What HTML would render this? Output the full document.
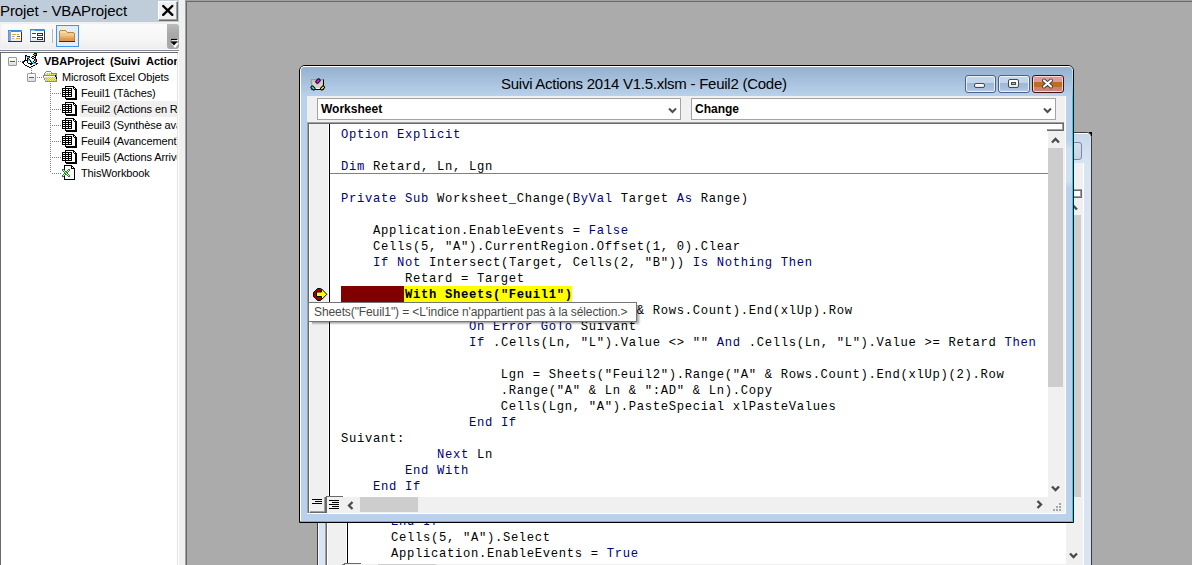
<!DOCTYPE html>
<html><head><meta charset="utf-8"><style>
*{margin:0;padding:0;box-sizing:border-box}
html,body{width:1192px;height:565px;overflow:hidden;background:#ababab;position:relative;font-family:"Liberation Sans",sans-serif}
.a{position:absolute}
.mono{font-family:"Liberation Mono",monospace;font-size:12.2px;letter-spacing:0.68px;line-height:16px;white-space:pre;color:#000}
.k{color:#00007f}
.ti{position:absolute;font-size:11px;line-height:16px;white-space:pre;color:#000;letter-spacing:-0.12px}
</style></head><body>
<div class="a" style="left:0px;top:0px;width:185px;height:565px;background:#f0f0f0"></div>
<div class="a" style="left:0px;top:0px;width:179px;height:22px;background:#bfcddb"></div>
<div class="a" style="left:0px;top:1px;font-size:15px;line-height:20px;letter-spacing:-0.12px;white-space:pre;color:#000">Projet - VBAProject</div>
<div class="a" style="left:158px;top:1px;width:20px;height:20px;background:#f0f0f0;border-top:1px solid #fff;border-left:1px solid #fff;border-right:1px solid #696969;border-bottom:1px solid #696969;box-shadow:inset -1px -1px 0 #a0a0a0"><svg width="18" height="18" class="a" style="left:0;top:0"><path d="M4.2 4 L13.3 12.8 M13.3 4 L4.2 12.8" stroke="#000" stroke-width="2.4" stroke-linecap="round"/></svg></div>
<div class="a" style="left:1px;top:24px;width:176px;height:25px;background:linear-gradient(#fbfbfb,#f6f6f6 60%,#ededed);border-radius:3px"></div>
<div class="a" style="left:167px;top:24px;width:12px;height:25px;background:linear-gradient(#b8bcbc,#a8a8a8 40%);border-radius:0 3px 3px 3px"></div>
<svg class="a" style="left:168px;top:38px" width="11" height="10"><path d="M4 2.5h6M4 5.5h6l-3 4z" stroke="#fff" stroke-width="1" fill="#fff"/><path d="M3 1.5h6" stroke="#000" stroke-width="1.2"/><path d="M2.5 3.5h7l-3.5 4z" fill="#000"/></svg>
<div class="a" style="left:0px;top:49px;width:179px;height:1px;background:#fafafa"></div>
<div class="a" style="left:0px;top:50px;width:179px;height:1px;background:#7d8799"></div>
<div class="a" style="left:0px;top:51px;width:179px;height:1px;background:#fff"></div>
<svg class="a" style="left:8px;top:30px" width="14" height="12" shape-rendering="crispEdges"><rect x="0" y="0" width="13" height="1" fill="#3c8de0"/><rect x="13" y="0" width="1" height="1" fill="#5f9ad8"/><rect x="0" y="1" width="1" height="1" fill="#3c8de0"/><rect x="1" y="1" width="2" height="1" fill="#9cc8f2"/><rect x="3" y="1" width="10" height="1" fill="#3c8de0"/><rect x="13" y="1" width="1" height="1" fill="#5f9ad8"/><rect x="0" y="2" width="1" height="1" fill="#5f9ad8"/><rect x="1" y="2" width="2" height="1" fill="#8aa4c8"/><rect x="3" y="2" width="10" height="1" fill="#fff"/><rect x="13" y="2" width="1" height="1" fill="#333"/><rect x="0" y="3" width="1" height="1" fill="#5f9ad8"/><rect x="1" y="3" width="2" height="1" fill="#8aa4c8"/><rect x="3" y="3" width="10" height="1" fill="#fff"/><rect x="13" y="3" width="1" height="1" fill="#333"/><rect x="0" y="4" width="1" height="1" fill="#5f9ad8"/><rect x="1" y="4" width="2" height="1" fill="#8aa4c8"/><rect x="3" y="4" width="1" height="1" fill="#fff"/><rect x="4" y="4" width="4" height="1" fill="#f0a030"/><rect x="8" y="4" width="1" height="1" fill="#fff"/><rect x="9" y="4" width="2" height="1" fill="#f0a030"/><rect x="11" y="4" width="2" height="1" fill="#fff"/><rect x="13" y="4" width="1" height="1" fill="#333"/><rect x="0" y="5" width="1" height="1" fill="#5f9ad8"/><rect x="1" y="5" width="2" height="1" fill="#8aa4c8"/><rect x="3" y="5" width="10" height="1" fill="#fff"/><rect x="13" y="5" width="1" height="1" fill="#333"/><rect x="0" y="6" width="1" height="1" fill="#5f9ad8"/><rect x="1" y="6" width="2" height="1" fill="#8aa4c8"/><rect x="3" y="6" width="1" height="1" fill="#fff"/><rect x="4" y="6" width="3" height="1" fill="#a8b4c4"/><rect x="7" y="6" width="2" height="1" fill="#fff"/><rect x="9" y="6" width="3" height="1" fill="#6a7490"/><rect x="12" y="6" width="1" height="1" fill="#fff"/><rect x="13" y="6" width="1" height="1" fill="#333"/><rect x="0" y="7" width="1" height="1" fill="#5f9ad8"/><rect x="1" y="7" width="2" height="1" fill="#8aa4c8"/><rect x="3" y="7" width="10" height="1" fill="#fff"/><rect x="13" y="7" width="1" height="1" fill="#333"/><rect x="0" y="8" width="1" height="1" fill="#5f9ad8"/><rect x="1" y="8" width="2" height="1" fill="#8aa4c8"/><rect x="3" y="8" width="1" height="1" fill="#fff"/><rect x="4" y="8" width="2" height="1" fill="#a8b4c4"/><rect x="6" y="8" width="2" height="1" fill="#fff"/><rect x="8" y="8" width="4" height="1" fill="#f0a030"/><rect x="12" y="8" width="1" height="1" fill="#fff"/><rect x="13" y="8" width="1" height="1" fill="#333"/><rect x="0" y="9" width="1" height="1" fill="#5f9ad8"/><rect x="1" y="9" width="2" height="1" fill="#8aa4c8"/><rect x="3" y="9" width="1" height="1" fill="#fff"/><rect x="4" y="9" width="9" height="1" fill="#e4eef8"/><rect x="13" y="9" width="1" height="1" fill="#333"/><rect x="0" y="10" width="1" height="1" fill="#5f9ad8"/><rect x="1" y="10" width="2" height="1" fill="#8aa4c8"/><rect x="3" y="10" width="10" height="1" fill="#e4eef8"/><rect x="13" y="10" width="1" height="1" fill="#333"/><rect x="0" y="11" width="14" height="1" fill="#333"/></svg>
<svg class="a" style="left:30px;top:29px" width="15" height="13" shape-rendering="crispEdges"><rect x="0" y="0" width="14" height="1" fill="#3c8de0"/><rect x="14" y="0" width="1" height="1" fill="#5f9ad8"/><rect x="0" y="1" width="1" height="1" fill="#3c8de0"/><rect x="1" y="1" width="4" height="1" fill="#9cc8f2"/><rect x="5" y="1" width="9" height="1" fill="#3c8de0"/><rect x="14" y="1" width="1" height="1" fill="#5f9ad8"/><rect x="0" y="2" width="1" height="1" fill="#5f9ad8"/><rect x="1" y="2" width="13" height="1" fill="#fff"/><rect x="14" y="2" width="1" height="1" fill="#333"/><rect x="0" y="3" width="1" height="1" fill="#5f9ad8"/><rect x="1" y="3" width="13" height="1" fill="#fff"/><rect x="14" y="3" width="1" height="1" fill="#333"/><rect x="0" y="4" width="1" height="1" fill="#5f9ad8"/><rect x="1" y="4" width="1" height="1" fill="#fff"/><rect x="2" y="4" width="4" height="1" fill="#444"/><rect x="6" y="4" width="1" height="1" fill="#fff"/><rect x="7" y="4" width="6" height="1" fill="#333"/><rect x="13" y="4" width="1" height="1" fill="#fff"/><rect x="14" y="4" width="1" height="1" fill="#333"/><rect x="0" y="5" width="1" height="1" fill="#5f9ad8"/><rect x="1" y="5" width="6" height="1" fill="#fff"/><rect x="7" y="5" width="1" height="1" fill="#333"/><rect x="8" y="5" width="4" height="1" fill="#fff"/><rect x="12" y="5" width="1" height="1" fill="#333"/><rect x="13" y="5" width="1" height="1" fill="#fff"/><rect x="14" y="5" width="1" height="1" fill="#333"/><rect x="0" y="6" width="1" height="1" fill="#5f9ad8"/><rect x="1" y="6" width="6" height="1" fill="#fff"/><rect x="7" y="6" width="6" height="1" fill="#333"/><rect x="13" y="6" width="1" height="1" fill="#fff"/><rect x="14" y="6" width="1" height="1" fill="#333"/><rect x="0" y="7" width="1" height="1" fill="#5f9ad8"/><rect x="1" y="7" width="13" height="1" fill="#fff"/><rect x="14" y="7" width="1" height="1" fill="#333"/><rect x="0" y="8" width="1" height="1" fill="#5f9ad8"/><rect x="1" y="8" width="1" height="1" fill="#fff"/><rect x="2" y="8" width="4" height="1" fill="#444"/><rect x="6" y="8" width="1" height="1" fill="#fff"/><rect x="7" y="8" width="6" height="1" fill="#333"/><rect x="13" y="8" width="1" height="1" fill="#fff"/><rect x="14" y="8" width="1" height="1" fill="#333"/><rect x="0" y="9" width="1" height="1" fill="#5f9ad8"/><rect x="1" y="9" width="6" height="1" fill="#fff"/><rect x="7" y="9" width="1" height="1" fill="#333"/><rect x="8" y="9" width="4" height="1" fill="#fff"/><rect x="12" y="9" width="1" height="1" fill="#333"/><rect x="13" y="9" width="1" height="1" fill="#fff"/><rect x="14" y="9" width="1" height="1" fill="#333"/><rect x="0" y="10" width="1" height="1" fill="#5f9ad8"/><rect x="1" y="10" width="1" height="1" fill="#fff"/><rect x="2" y="10" width="5" height="1" fill="#dfeaf6"/><rect x="7" y="10" width="6" height="1" fill="#333"/><rect x="13" y="10" width="1" height="1" fill="#dfeaf6"/><rect x="14" y="10" width="1" height="1" fill="#333"/><rect x="0" y="11" width="1" height="1" fill="#5f9ad8"/><rect x="1" y="11" width="13" height="1" fill="#dfeaf6"/><rect x="14" y="11" width="1" height="1" fill="#333"/><rect x="0" y="12" width="15" height="1" fill="#333"/></svg>
<div class="a" style="left:52px;top:29px;width:1px;height:14px;background:#b8b8b8"></div>
<div class="a" style="left:56px;top:25px;width:23px;height:22px;background:#e5eef8;border:1px solid #3d95f0"></div>
<svg class="a" style="left:59px;top:30px" width="16" height="12" shape-rendering="crispEdges"><rect x="1" y="0" width="6" height="1" fill="#b8884a"/><rect x="0" y="1" width="1" height="1" fill="#b8884a"/><rect x="1" y="1" width="6" height="1" fill="#f6dca0"/><rect x="7" y="1" width="1" height="1" fill="#b8884a"/><rect x="0" y="2" width="1" height="1" fill="#b8884a"/><rect x="1" y="2" width="7" height="1" fill="#f6dca0"/><rect x="8" y="2" width="7" height="1" fill="#b8884a"/><rect x="0" y="3" width="1" height="1" fill="#b8884a"/><rect x="1" y="3" width="14" height="1" fill="#f2c888"/><rect x="15" y="3" width="1" height="1" fill="#b8884a"/><rect x="0" y="4" width="1" height="1" fill="#b8884a"/><rect x="1" y="4" width="14" height="1" fill="#f2c888"/><rect x="15" y="4" width="1" height="1" fill="#b8884a"/><rect x="0" y="5" width="1" height="1" fill="#b8884a"/><rect x="1" y="5" width="14" height="1" fill="#f2c888"/><rect x="15" y="5" width="1" height="1" fill="#b8884a"/><rect x="0" y="6" width="1" height="1" fill="#b8884a"/><rect x="1" y="6" width="14" height="1" fill="#eab06a"/><rect x="15" y="6" width="1" height="1" fill="#b8884a"/><rect x="0" y="7" width="1" height="1" fill="#b8884a"/><rect x="1" y="7" width="14" height="1" fill="#eab06a"/><rect x="15" y="7" width="1" height="1" fill="#b8884a"/><rect x="0" y="8" width="1" height="1" fill="#b8884a"/><rect x="1" y="8" width="14" height="1" fill="#dc9a52"/><rect x="15" y="8" width="1" height="1" fill="#b8884a"/><rect x="0" y="9" width="1" height="1" fill="#b8884a"/><rect x="1" y="9" width="14" height="1" fill="#dc9a52"/><rect x="15" y="9" width="1" height="1" fill="#b8884a"/><rect x="0" y="10" width="1" height="1" fill="#b8884a"/><rect x="1" y="10" width="14" height="1" fill="#dc9a52"/><rect x="15" y="10" width="1" height="1" fill="#b8884a"/><rect x="0" y="11" width="16" height="1" fill="#3a2a18"/></svg>
<div class="a" style="left:0px;top:52px;width:178px;height:513px;background:#fff;border-left:1px solid #696969;border-top:1px solid #696969"></div>
<div class="a" style="left:178px;top:52px;width:1px;height:513px;background:#fff"></div>
<div class="a" style="left:0;top:0;width:177px;height:565px;overflow:hidden">
<div class="a" style="left:8px;top:57px;width:9px;height:9px;border:1px solid #9a9a9a;background:linear-gradient(#fff,#dcdcdc);border-radius:1px"></div><div class="a" style="left:10px;top:61px;width:5px;height:1px;background:#4b5a88"></div>
<div class="a" style="left:27px;top:73px;width:9px;height:9px;border:1px solid #9a9a9a;background:linear-gradient(#fff,#dcdcdc);border-radius:1px"></div><div class="a" style="left:29px;top:77px;width:5px;height:1px;background:#4b5a88"></div>
<div class="a" style="left:18px;top:61px;width:6px;height:1px;background:repeating-linear-gradient(90deg,#808080 0 1px,transparent 1px 2px)"></div>
<div class="a" style="left:31px;top:68px;width:1px;height:5px;background:repeating-linear-gradient(180deg,#808080 0 1px,transparent 1px 2px)"></div>
<div class="a" style="left:37px;top:77px;width:7px;height:1px;background:repeating-linear-gradient(90deg,#808080 0 1px,transparent 1px 2px)"></div>
<div class="a" style="left:50px;top:83px;width:1px;height:90px;background:repeating-linear-gradient(180deg,#808080 0 1px,transparent 1px 2px)"></div>
<div class="a" style="left:52px;top:93px;width:10px;height:1px;background:repeating-linear-gradient(90deg,#808080 0 1px,transparent 1px 2px)"></div>
<div class="a" style="left:52px;top:109px;width:10px;height:1px;background:repeating-linear-gradient(90deg,#808080 0 1px,transparent 1px 2px)"></div>
<div class="a" style="left:52px;top:125px;width:10px;height:1px;background:repeating-linear-gradient(90deg,#808080 0 1px,transparent 1px 2px)"></div>
<div class="a" style="left:52px;top:141px;width:10px;height:1px;background:repeating-linear-gradient(90deg,#808080 0 1px,transparent 1px 2px)"></div>
<div class="a" style="left:52px;top:157px;width:10px;height:1px;background:repeating-linear-gradient(90deg,#808080 0 1px,transparent 1px 2px)"></div>
<div class="a" style="left:52px;top:173px;width:10px;height:1px;background:repeating-linear-gradient(90deg,#808080 0 1px,transparent 1px 2px)"></div>
<svg class="a" style="left:22px;top:53px" width="17" height="15" shape-rendering="crispEdges"><rect x="12" y="0" width="3" height="1" fill="#000"/><rect x="11" y="1" width="1" height="1" fill="#000"/><rect x="12" y="1" width="2" height="1" fill="#70c000"/><rect x="14" y="1" width="1" height="1" fill="#000"/><rect x="3" y="2" width="2" height="1" fill="#000"/><rect x="12" y="2" width="3" height="1" fill="#000"/><rect x="3" y="3" width="1" height="1" fill="#000"/><rect x="4" y="3" width="1" height="1" fill="#00e8ff"/><rect x="5" y="3" width="3" height="1" fill="#000"/><rect x="10" y="3" width="2" height="1" fill="#000"/><rect x="13" y="3" width="1" height="1" fill="#000"/><rect x="3" y="4" width="1" height="1" fill="#000"/><rect x="4" y="4" width="1" height="1" fill="#fff"/><rect x="5" y="4" width="2" height="1" fill="#00e8ff"/><rect x="7" y="4" width="1" height="1" fill="#000"/><rect x="9" y="4" width="1" height="1" fill="#000"/><rect x="10" y="4" width="2" height="1" fill="#f0f000"/><rect x="12" y="4" width="2" height="1" fill="#000"/><rect x="3" y="5" width="1" height="1" fill="#000"/><rect x="4" y="5" width="1" height="1" fill="#fff"/><rect x="5" y="5" width="2" height="1" fill="#000"/><rect x="10" y="5" width="2" height="1" fill="#000"/><rect x="13" y="5" width="1" height="1" fill="#000"/><rect x="3" y="6" width="1" height="1" fill="#000"/><rect x="4" y="6" width="1" height="1" fill="#fff"/><rect x="5" y="6" width="1" height="1" fill="#000"/><rect x="6" y="6" width="1" height="1" fill="#00e8ff"/><rect x="7" y="6" width="1" height="1" fill="#000"/><rect x="12" y="6" width="1" height="1" fill="#000"/><rect x="13" y="6" width="1" height="1" fill="#ff00ff"/><rect x="14" y="6" width="1" height="1" fill="#000"/><rect x="2" y="7" width="4" height="1" fill="#000"/><rect x="6" y="7" width="2" height="1" fill="#00e8ff"/><rect x="8" y="7" width="1" height="1" fill="#000"/><rect x="12" y="7" width="1" height="1" fill="#000"/><rect x="13" y="7" width="1" height="1" fill="#ff00ff"/><rect x="14" y="7" width="1" height="1" fill="#000"/><rect x="1" y="8" width="2" height="1" fill="#000"/><rect x="5" y="8" width="1" height="1" fill="#000"/><rect x="6" y="8" width="2" height="1" fill="#fff"/><rect x="8" y="8" width="1" height="1" fill="#000"/><rect x="9" y="8" width="1" height="1" fill="#00e8ff"/><rect x="11" y="8" width="1" height="1" fill="#000"/><rect x="13" y="8" width="1" height="1" fill="#ff00ff"/><rect x="14" y="8" width="1" height="1" fill="#000"/><rect x="0" y="9" width="2" height="1" fill="#000"/><rect x="5" y="9" width="1" height="1" fill="#000"/><rect x="6" y="9" width="3" height="1" fill="#fff"/><rect x="9" y="9" width="1" height="1" fill="#000"/><rect x="10" y="9" width="2" height="1" fill="#00e8ff"/><rect x="12" y="9" width="2" height="1" fill="#000"/><rect x="1" y="10" width="1" height="1" fill="#000"/><rect x="6" y="10" width="5" height="1" fill="#000"/><rect x="11" y="10" width="3" height="1" fill="#00e8ff"/><rect x="14" y="10" width="2" height="1" fill="#000"/><rect x="2" y="11" width="1" height="1" fill="#000"/><rect x="8" y="11" width="2" height="1" fill="#000"/><rect x="13" y="11" width="1" height="1" fill="#00e8ff"/><rect x="14" y="11" width="1" height="1" fill="#000"/><rect x="3" y="12" width="2" height="1" fill="#000"/><rect x="11" y="12" width="2" height="1" fill="#000"/><rect x="5" y="13" width="2" height="1" fill="#000"/><rect x="9" y="13" width="2" height="1" fill="#000"/><rect x="7" y="14" width="2" height="1" fill="#000"/></svg>
<svg class="a" style="left:43px;top:71px" width="15" height="11" shape-rendering="crispEdges"><rect x="3" y="0" width="5" height="1" fill="#8a8a8a"/><rect x="2" y="1" width="1" height="1" fill="#8a8a8a"/><rect x="3" y="1" width="5" height="1" fill="#fff"/><rect x="8" y="1" width="1" height="1" fill="#8a8a8a"/><rect x="1" y="2" width="1" height="1" fill="#8a8a8a"/><rect x="2" y="2" width="1" height="1" fill="#fff"/><rect x="3" y="2" width="1" height="1" fill="#ffff00"/><rect x="4" y="2" width="1" height="1" fill="#b8b8c8"/><rect x="5" y="2" width="1" height="1" fill="#ffff00"/><rect x="6" y="2" width="1" height="1" fill="#b8b8c8"/><rect x="7" y="2" width="1" height="1" fill="#ffff00"/><rect x="8" y="2" width="6" height="1" fill="#8a8a8a"/><rect x="1" y="3" width="1" height="1" fill="#8a8a8a"/><rect x="2" y="3" width="1" height="1" fill="#b8b8c8"/><rect x="3" y="3" width="1" height="1" fill="#ffff00"/><rect x="4" y="3" width="1" height="1" fill="#b8b8c8"/><rect x="5" y="3" width="1" height="1" fill="#ffff00"/><rect x="6" y="3" width="1" height="1" fill="#b8b8c8"/><rect x="7" y="3" width="1" height="1" fill="#ffff00"/><rect x="8" y="3" width="1" height="1" fill="#b8b8c8"/><rect x="9" y="3" width="1" height="1" fill="#ffff00"/><rect x="10" y="3" width="1" height="1" fill="#b8b8c8"/><rect x="11" y="3" width="1" height="1" fill="#ffff00"/><rect x="12" y="3" width="1" height="1" fill="#b8b8c8"/><rect x="13" y="3" width="1" height="1" fill="#8a8a8a"/><rect x="0" y="4" width="12" height="1" fill="#8a8a8a"/><rect x="12" y="4" width="1" height="1" fill="#000"/><rect x="13" y="4" width="1" height="1" fill="#8a8a8a"/><rect x="0" y="5" width="1" height="1" fill="#8a8a8a"/><rect x="1" y="5" width="11" height="1" fill="#fff"/><rect x="12" y="5" width="1" height="1" fill="#000"/><rect x="13" y="5" width="1" height="1" fill="#8a8a8a"/><rect x="0" y="6" width="1" height="1" fill="#8a8a8a"/><rect x="1" y="6" width="1" height="1" fill="#fff"/><rect x="2" y="6" width="1" height="1" fill="#ffff00"/><rect x="3" y="6" width="1" height="1" fill="#b8b8c8"/><rect x="4" y="6" width="1" height="1" fill="#ffff00"/><rect x="5" y="6" width="1" height="1" fill="#b8b8c8"/><rect x="6" y="6" width="1" height="1" fill="#ffff00"/><rect x="7" y="6" width="1" height="1" fill="#b8b8c8"/><rect x="8" y="6" width="1" height="1" fill="#ffff00"/><rect x="9" y="6" width="1" height="1" fill="#b8b8c8"/><rect x="10" y="6" width="1" height="1" fill="#ffff00"/><rect x="11" y="6" width="1" height="1" fill="#b8b8c8"/><rect x="12" y="6" width="1" height="1" fill="#ffff00"/><rect x="13" y="6" width="1" height="1" fill="#000"/><rect x="1" y="7" width="1" height="1" fill="#8a8a8a"/><rect x="2" y="7" width="1" height="1" fill="#b8b8c8"/><rect x="3" y="7" width="1" height="1" fill="#ffff00"/><rect x="4" y="7" width="1" height="1" fill="#b8b8c8"/><rect x="5" y="7" width="1" height="1" fill="#ffff00"/><rect x="6" y="7" width="1" height="1" fill="#b8b8c8"/><rect x="7" y="7" width="1" height="1" fill="#ffff00"/><rect x="8" y="7" width="1" height="1" fill="#b8b8c8"/><rect x="9" y="7" width="1" height="1" fill="#ffff00"/><rect x="10" y="7" width="1" height="1" fill="#b8b8c8"/><rect x="11" y="7" width="1" height="1" fill="#ffff00"/><rect x="12" y="7" width="1" height="1" fill="#b8b8c8"/><rect x="13" y="7" width="1" height="1" fill="#000"/><rect x="1" y="8" width="1" height="1" fill="#8a8a8a"/><rect x="2" y="8" width="1" height="1" fill="#ffff00"/><rect x="3" y="8" width="1" height="1" fill="#b8b8c8"/><rect x="4" y="8" width="1" height="1" fill="#ffff00"/><rect x="5" y="8" width="1" height="1" fill="#b8b8c8"/><rect x="6" y="8" width="1" height="1" fill="#ffff00"/><rect x="7" y="8" width="1" height="1" fill="#b8b8c8"/><rect x="8" y="8" width="1" height="1" fill="#ffff00"/><rect x="9" y="8" width="1" height="1" fill="#b8b8c8"/><rect x="10" y="8" width="1" height="1" fill="#ffff00"/><rect x="11" y="8" width="1" height="1" fill="#b8b8c8"/><rect x="12" y="8" width="1" height="1" fill="#ffff00"/><rect x="13" y="8" width="1" height="1" fill="#8a8a8a"/><rect x="2" y="9" width="1" height="1" fill="#b8b8c8"/><rect x="3" y="9" width="1" height="1" fill="#ffff00"/><rect x="4" y="9" width="1" height="1" fill="#b8b8c8"/><rect x="5" y="9" width="1" height="1" fill="#ffff00"/><rect x="6" y="9" width="1" height="1" fill="#b8b8c8"/><rect x="7" y="9" width="1" height="1" fill="#ffff00"/><rect x="8" y="9" width="1" height="1" fill="#b8b8c8"/><rect x="9" y="9" width="1" height="1" fill="#ffff00"/><rect x="10" y="9" width="1" height="1" fill="#b8b8c8"/><rect x="11" y="9" width="1" height="1" fill="#ffff00"/><rect x="12" y="9" width="1" height="1" fill="#b8b8c8"/><rect x="13" y="9" width="1" height="1" fill="#8a8a8a"/><rect x="2" y="10" width="12" height="1" fill="#8a8a8a"/></svg>
<div style="position:absolute;top:53px;font-size:11px;font-weight:bold;line-height:16px;white-space:pre;left:44px">VBAProject</div><div style="position:absolute;top:53px;font-size:11px;font-weight:bold;line-height:16px;white-space:pre;left:110px">(Suivi</div><div style="position:absolute;top:53px;font-size:11px;font-weight:bold;line-height:16px;white-space:pre;left:146px">Actions 2014</div>
<div class="ti" style="left:62px;top:69px">Microsoft Excel Objets</div>
<div class="a" style="left:80px;top:101px;width:98px;height:16px;background:#f0f0f0"></div>
<svg class="a" style="left:62px;top:86px" width="16" height="14" shape-rendering="crispEdges"><rect x="3" y="0" width="9" height="1" fill="#000"/><rect x="3" y="1" width="1" height="1" fill="#000"/><rect x="4" y="1" width="7" height="1" fill="#fff"/><rect x="11" y="1" width="2" height="1" fill="#000"/><rect x="0" y="2" width="10" height="1" fill="#000"/><rect x="10" y="2" width="1" height="1" fill="#fff"/><rect x="11" y="2" width="1" height="1" fill="#000"/><rect x="12" y="2" width="1" height="1" fill="#fff"/><rect x="13" y="2" width="1" height="1" fill="#000"/><rect x="0" y="3" width="1" height="1" fill="#000"/><rect x="1" y="3" width="2" height="1" fill="#fff"/><rect x="3" y="3" width="1" height="1" fill="#000"/><rect x="4" y="3" width="2" height="1" fill="#fff"/><rect x="6" y="3" width="1" height="1" fill="#000"/><rect x="7" y="3" width="2" height="1" fill="#fff"/><rect x="9" y="3" width="1" height="1" fill="#000"/><rect x="10" y="3" width="2" height="1" fill="#fff"/><rect x="12" y="3" width="3" height="1" fill="#000"/><rect x="0" y="4" width="10" height="1" fill="#000"/><rect x="10" y="4" width="3" height="1" fill="#fff"/><rect x="13" y="4" width="2" height="1" fill="#000"/><rect x="0" y="5" width="1" height="1" fill="#000"/><rect x="1" y="5" width="2" height="1" fill="#fff"/><rect x="3" y="5" width="1" height="1" fill="#000"/><rect x="4" y="5" width="2" height="1" fill="#fff"/><rect x="6" y="5" width="1" height="1" fill="#000"/><rect x="7" y="5" width="2" height="1" fill="#fff"/><rect x="9" y="5" width="1" height="1" fill="#000"/><rect x="10" y="5" width="3" height="1" fill="#fff"/><rect x="13" y="5" width="2" height="1" fill="#000"/><rect x="0" y="6" width="10" height="1" fill="#000"/><rect x="10" y="6" width="3" height="1" fill="#fff"/><rect x="13" y="6" width="2" height="1" fill="#000"/><rect x="0" y="7" width="1" height="1" fill="#000"/><rect x="1" y="7" width="2" height="1" fill="#fff"/><rect x="3" y="7" width="1" height="1" fill="#000"/><rect x="4" y="7" width="2" height="1" fill="#fff"/><rect x="6" y="7" width="1" height="1" fill="#000"/><rect x="7" y="7" width="2" height="1" fill="#fff"/><rect x="9" y="7" width="1" height="1" fill="#000"/><rect x="10" y="7" width="3" height="1" fill="#fff"/><rect x="13" y="7" width="2" height="1" fill="#000"/><rect x="0" y="8" width="10" height="1" fill="#000"/><rect x="10" y="8" width="3" height="1" fill="#fff"/><rect x="13" y="8" width="2" height="1" fill="#000"/><rect x="0" y="9" width="1" height="1" fill="#000"/><rect x="1" y="9" width="2" height="1" fill="#fff"/><rect x="3" y="9" width="1" height="1" fill="#000"/><rect x="4" y="9" width="2" height="1" fill="#fff"/><rect x="6" y="9" width="1" height="1" fill="#000"/><rect x="7" y="9" width="2" height="1" fill="#fff"/><rect x="9" y="9" width="1" height="1" fill="#000"/><rect x="10" y="9" width="3" height="1" fill="#fff"/><rect x="13" y="9" width="2" height="1" fill="#000"/><rect x="0" y="10" width="10" height="1" fill="#000"/><rect x="10" y="10" width="3" height="1" fill="#fff"/><rect x="13" y="10" width="2" height="1" fill="#000"/><rect x="3" y="11" width="1" height="1" fill="#000"/><rect x="4" y="11" width="9" height="1" fill="#fff"/><rect x="13" y="11" width="2" height="1" fill="#000"/><rect x="3" y="12" width="12" height="1" fill="#000"/><rect x="4" y="13" width="11" height="1" fill="#000"/></svg>
<div class="ti" style="left:81px;top:85px">Feuil1 (Tâches)</div>
<svg class="a" style="left:62px;top:102px" width="16" height="14" shape-rendering="crispEdges"><rect x="3" y="0" width="9" height="1" fill="#000"/><rect x="3" y="1" width="1" height="1" fill="#000"/><rect x="4" y="1" width="7" height="1" fill="#fff"/><rect x="11" y="1" width="2" height="1" fill="#000"/><rect x="0" y="2" width="10" height="1" fill="#000"/><rect x="10" y="2" width="1" height="1" fill="#fff"/><rect x="11" y="2" width="1" height="1" fill="#000"/><rect x="12" y="2" width="1" height="1" fill="#fff"/><rect x="13" y="2" width="1" height="1" fill="#000"/><rect x="0" y="3" width="1" height="1" fill="#000"/><rect x="1" y="3" width="2" height="1" fill="#fff"/><rect x="3" y="3" width="1" height="1" fill="#000"/><rect x="4" y="3" width="2" height="1" fill="#fff"/><rect x="6" y="3" width="1" height="1" fill="#000"/><rect x="7" y="3" width="2" height="1" fill="#fff"/><rect x="9" y="3" width="1" height="1" fill="#000"/><rect x="10" y="3" width="2" height="1" fill="#fff"/><rect x="12" y="3" width="3" height="1" fill="#000"/><rect x="0" y="4" width="10" height="1" fill="#000"/><rect x="10" y="4" width="3" height="1" fill="#fff"/><rect x="13" y="4" width="2" height="1" fill="#000"/><rect x="0" y="5" width="1" height="1" fill="#000"/><rect x="1" y="5" width="2" height="1" fill="#fff"/><rect x="3" y="5" width="1" height="1" fill="#000"/><rect x="4" y="5" width="2" height="1" fill="#fff"/><rect x="6" y="5" width="1" height="1" fill="#000"/><rect x="7" y="5" width="2" height="1" fill="#fff"/><rect x="9" y="5" width="1" height="1" fill="#000"/><rect x="10" y="5" width="3" height="1" fill="#fff"/><rect x="13" y="5" width="2" height="1" fill="#000"/><rect x="0" y="6" width="10" height="1" fill="#000"/><rect x="10" y="6" width="3" height="1" fill="#fff"/><rect x="13" y="6" width="2" height="1" fill="#000"/><rect x="0" y="7" width="1" height="1" fill="#000"/><rect x="1" y="7" width="2" height="1" fill="#fff"/><rect x="3" y="7" width="1" height="1" fill="#000"/><rect x="4" y="7" width="2" height="1" fill="#fff"/><rect x="6" y="7" width="1" height="1" fill="#000"/><rect x="7" y="7" width="2" height="1" fill="#fff"/><rect x="9" y="7" width="1" height="1" fill="#000"/><rect x="10" y="7" width="3" height="1" fill="#fff"/><rect x="13" y="7" width="2" height="1" fill="#000"/><rect x="0" y="8" width="10" height="1" fill="#000"/><rect x="10" y="8" width="3" height="1" fill="#fff"/><rect x="13" y="8" width="2" height="1" fill="#000"/><rect x="0" y="9" width="1" height="1" fill="#000"/><rect x="1" y="9" width="2" height="1" fill="#fff"/><rect x="3" y="9" width="1" height="1" fill="#000"/><rect x="4" y="9" width="2" height="1" fill="#fff"/><rect x="6" y="9" width="1" height="1" fill="#000"/><rect x="7" y="9" width="2" height="1" fill="#fff"/><rect x="9" y="9" width="1" height="1" fill="#000"/><rect x="10" y="9" width="3" height="1" fill="#fff"/><rect x="13" y="9" width="2" height="1" fill="#000"/><rect x="0" y="10" width="10" height="1" fill="#000"/><rect x="10" y="10" width="3" height="1" fill="#fff"/><rect x="13" y="10" width="2" height="1" fill="#000"/><rect x="3" y="11" width="1" height="1" fill="#000"/><rect x="4" y="11" width="9" height="1" fill="#fff"/><rect x="13" y="11" width="2" height="1" fill="#000"/><rect x="3" y="12" width="12" height="1" fill="#000"/><rect x="4" y="13" width="11" height="1" fill="#000"/></svg>
<div class="ti" style="left:81px;top:101px">Feuil2 (Actions en Retard)</div>
<svg class="a" style="left:62px;top:118px" width="16" height="14" shape-rendering="crispEdges"><rect x="3" y="0" width="9" height="1" fill="#000"/><rect x="3" y="1" width="1" height="1" fill="#000"/><rect x="4" y="1" width="7" height="1" fill="#fff"/><rect x="11" y="1" width="2" height="1" fill="#000"/><rect x="0" y="2" width="10" height="1" fill="#000"/><rect x="10" y="2" width="1" height="1" fill="#fff"/><rect x="11" y="2" width="1" height="1" fill="#000"/><rect x="12" y="2" width="1" height="1" fill="#fff"/><rect x="13" y="2" width="1" height="1" fill="#000"/><rect x="0" y="3" width="1" height="1" fill="#000"/><rect x="1" y="3" width="2" height="1" fill="#fff"/><rect x="3" y="3" width="1" height="1" fill="#000"/><rect x="4" y="3" width="2" height="1" fill="#fff"/><rect x="6" y="3" width="1" height="1" fill="#000"/><rect x="7" y="3" width="2" height="1" fill="#fff"/><rect x="9" y="3" width="1" height="1" fill="#000"/><rect x="10" y="3" width="2" height="1" fill="#fff"/><rect x="12" y="3" width="3" height="1" fill="#000"/><rect x="0" y="4" width="10" height="1" fill="#000"/><rect x="10" y="4" width="3" height="1" fill="#fff"/><rect x="13" y="4" width="2" height="1" fill="#000"/><rect x="0" y="5" width="1" height="1" fill="#000"/><rect x="1" y="5" width="2" height="1" fill="#fff"/><rect x="3" y="5" width="1" height="1" fill="#000"/><rect x="4" y="5" width="2" height="1" fill="#fff"/><rect x="6" y="5" width="1" height="1" fill="#000"/><rect x="7" y="5" width="2" height="1" fill="#fff"/><rect x="9" y="5" width="1" height="1" fill="#000"/><rect x="10" y="5" width="3" height="1" fill="#fff"/><rect x="13" y="5" width="2" height="1" fill="#000"/><rect x="0" y="6" width="10" height="1" fill="#000"/><rect x="10" y="6" width="3" height="1" fill="#fff"/><rect x="13" y="6" width="2" height="1" fill="#000"/><rect x="0" y="7" width="1" height="1" fill="#000"/><rect x="1" y="7" width="2" height="1" fill="#fff"/><rect x="3" y="7" width="1" height="1" fill="#000"/><rect x="4" y="7" width="2" height="1" fill="#fff"/><rect x="6" y="7" width="1" height="1" fill="#000"/><rect x="7" y="7" width="2" height="1" fill="#fff"/><rect x="9" y="7" width="1" height="1" fill="#000"/><rect x="10" y="7" width="3" height="1" fill="#fff"/><rect x="13" y="7" width="2" height="1" fill="#000"/><rect x="0" y="8" width="10" height="1" fill="#000"/><rect x="10" y="8" width="3" height="1" fill="#fff"/><rect x="13" y="8" width="2" height="1" fill="#000"/><rect x="0" y="9" width="1" height="1" fill="#000"/><rect x="1" y="9" width="2" height="1" fill="#fff"/><rect x="3" y="9" width="1" height="1" fill="#000"/><rect x="4" y="9" width="2" height="1" fill="#fff"/><rect x="6" y="9" width="1" height="1" fill="#000"/><rect x="7" y="9" width="2" height="1" fill="#fff"/><rect x="9" y="9" width="1" height="1" fill="#000"/><rect x="10" y="9" width="3" height="1" fill="#fff"/><rect x="13" y="9" width="2" height="1" fill="#000"/><rect x="0" y="10" width="10" height="1" fill="#000"/><rect x="10" y="10" width="3" height="1" fill="#fff"/><rect x="13" y="10" width="2" height="1" fill="#000"/><rect x="3" y="11" width="1" height="1" fill="#000"/><rect x="4" y="11" width="9" height="1" fill="#fff"/><rect x="13" y="11" width="2" height="1" fill="#000"/><rect x="3" y="12" width="12" height="1" fill="#000"/><rect x="4" y="13" width="11" height="1" fill="#000"/></svg>
<div class="ti" style="left:81px;top:117px">Feuil3 (Synthèse avancement)</div>
<svg class="a" style="left:62px;top:134px" width="16" height="14" shape-rendering="crispEdges"><rect x="3" y="0" width="9" height="1" fill="#000"/><rect x="3" y="1" width="1" height="1" fill="#000"/><rect x="4" y="1" width="7" height="1" fill="#fff"/><rect x="11" y="1" width="2" height="1" fill="#000"/><rect x="0" y="2" width="10" height="1" fill="#000"/><rect x="10" y="2" width="1" height="1" fill="#fff"/><rect x="11" y="2" width="1" height="1" fill="#000"/><rect x="12" y="2" width="1" height="1" fill="#fff"/><rect x="13" y="2" width="1" height="1" fill="#000"/><rect x="0" y="3" width="1" height="1" fill="#000"/><rect x="1" y="3" width="2" height="1" fill="#fff"/><rect x="3" y="3" width="1" height="1" fill="#000"/><rect x="4" y="3" width="2" height="1" fill="#fff"/><rect x="6" y="3" width="1" height="1" fill="#000"/><rect x="7" y="3" width="2" height="1" fill="#fff"/><rect x="9" y="3" width="1" height="1" fill="#000"/><rect x="10" y="3" width="2" height="1" fill="#fff"/><rect x="12" y="3" width="3" height="1" fill="#000"/><rect x="0" y="4" width="10" height="1" fill="#000"/><rect x="10" y="4" width="3" height="1" fill="#fff"/><rect x="13" y="4" width="2" height="1" fill="#000"/><rect x="0" y="5" width="1" height="1" fill="#000"/><rect x="1" y="5" width="2" height="1" fill="#fff"/><rect x="3" y="5" width="1" height="1" fill="#000"/><rect x="4" y="5" width="2" height="1" fill="#fff"/><rect x="6" y="5" width="1" height="1" fill="#000"/><rect x="7" y="5" width="2" height="1" fill="#fff"/><rect x="9" y="5" width="1" height="1" fill="#000"/><rect x="10" y="5" width="3" height="1" fill="#fff"/><rect x="13" y="5" width="2" height="1" fill="#000"/><rect x="0" y="6" width="10" height="1" fill="#000"/><rect x="10" y="6" width="3" height="1" fill="#fff"/><rect x="13" y="6" width="2" height="1" fill="#000"/><rect x="0" y="7" width="1" height="1" fill="#000"/><rect x="1" y="7" width="2" height="1" fill="#fff"/><rect x="3" y="7" width="1" height="1" fill="#000"/><rect x="4" y="7" width="2" height="1" fill="#fff"/><rect x="6" y="7" width="1" height="1" fill="#000"/><rect x="7" y="7" width="2" height="1" fill="#fff"/><rect x="9" y="7" width="1" height="1" fill="#000"/><rect x="10" y="7" width="3" height="1" fill="#fff"/><rect x="13" y="7" width="2" height="1" fill="#000"/><rect x="0" y="8" width="10" height="1" fill="#000"/><rect x="10" y="8" width="3" height="1" fill="#fff"/><rect x="13" y="8" width="2" height="1" fill="#000"/><rect x="0" y="9" width="1" height="1" fill="#000"/><rect x="1" y="9" width="2" height="1" fill="#fff"/><rect x="3" y="9" width="1" height="1" fill="#000"/><rect x="4" y="9" width="2" height="1" fill="#fff"/><rect x="6" y="9" width="1" height="1" fill="#000"/><rect x="7" y="9" width="2" height="1" fill="#fff"/><rect x="9" y="9" width="1" height="1" fill="#000"/><rect x="10" y="9" width="3" height="1" fill="#fff"/><rect x="13" y="9" width="2" height="1" fill="#000"/><rect x="0" y="10" width="10" height="1" fill="#000"/><rect x="10" y="10" width="3" height="1" fill="#fff"/><rect x="13" y="10" width="2" height="1" fill="#000"/><rect x="3" y="11" width="1" height="1" fill="#000"/><rect x="4" y="11" width="9" height="1" fill="#fff"/><rect x="13" y="11" width="2" height="1" fill="#000"/><rect x="3" y="12" width="12" height="1" fill="#000"/><rect x="4" y="13" width="11" height="1" fill="#000"/></svg>
<div class="ti" style="left:81px;top:133px">Feuil4 (Avancement)</div>
<svg class="a" style="left:62px;top:150px" width="16" height="14" shape-rendering="crispEdges"><rect x="3" y="0" width="9" height="1" fill="#000"/><rect x="3" y="1" width="1" height="1" fill="#000"/><rect x="4" y="1" width="7" height="1" fill="#fff"/><rect x="11" y="1" width="2" height="1" fill="#000"/><rect x="0" y="2" width="10" height="1" fill="#000"/><rect x="10" y="2" width="1" height="1" fill="#fff"/><rect x="11" y="2" width="1" height="1" fill="#000"/><rect x="12" y="2" width="1" height="1" fill="#fff"/><rect x="13" y="2" width="1" height="1" fill="#000"/><rect x="0" y="3" width="1" height="1" fill="#000"/><rect x="1" y="3" width="2" height="1" fill="#fff"/><rect x="3" y="3" width="1" height="1" fill="#000"/><rect x="4" y="3" width="2" height="1" fill="#fff"/><rect x="6" y="3" width="1" height="1" fill="#000"/><rect x="7" y="3" width="2" height="1" fill="#fff"/><rect x="9" y="3" width="1" height="1" fill="#000"/><rect x="10" y="3" width="2" height="1" fill="#fff"/><rect x="12" y="3" width="3" height="1" fill="#000"/><rect x="0" y="4" width="10" height="1" fill="#000"/><rect x="10" y="4" width="3" height="1" fill="#fff"/><rect x="13" y="4" width="2" height="1" fill="#000"/><rect x="0" y="5" width="1" height="1" fill="#000"/><rect x="1" y="5" width="2" height="1" fill="#fff"/><rect x="3" y="5" width="1" height="1" fill="#000"/><rect x="4" y="5" width="2" height="1" fill="#fff"/><rect x="6" y="5" width="1" height="1" fill="#000"/><rect x="7" y="5" width="2" height="1" fill="#fff"/><rect x="9" y="5" width="1" height="1" fill="#000"/><rect x="10" y="5" width="3" height="1" fill="#fff"/><rect x="13" y="5" width="2" height="1" fill="#000"/><rect x="0" y="6" width="10" height="1" fill="#000"/><rect x="10" y="6" width="3" height="1" fill="#fff"/><rect x="13" y="6" width="2" height="1" fill="#000"/><rect x="0" y="7" width="1" height="1" fill="#000"/><rect x="1" y="7" width="2" height="1" fill="#fff"/><rect x="3" y="7" width="1" height="1" fill="#000"/><rect x="4" y="7" width="2" height="1" fill="#fff"/><rect x="6" y="7" width="1" height="1" fill="#000"/><rect x="7" y="7" width="2" height="1" fill="#fff"/><rect x="9" y="7" width="1" height="1" fill="#000"/><rect x="10" y="7" width="3" height="1" fill="#fff"/><rect x="13" y="7" width="2" height="1" fill="#000"/><rect x="0" y="8" width="10" height="1" fill="#000"/><rect x="10" y="8" width="3" height="1" fill="#fff"/><rect x="13" y="8" width="2" height="1" fill="#000"/><rect x="0" y="9" width="1" height="1" fill="#000"/><rect x="1" y="9" width="2" height="1" fill="#fff"/><rect x="3" y="9" width="1" height="1" fill="#000"/><rect x="4" y="9" width="2" height="1" fill="#fff"/><rect x="6" y="9" width="1" height="1" fill="#000"/><rect x="7" y="9" width="2" height="1" fill="#fff"/><rect x="9" y="9" width="1" height="1" fill="#000"/><rect x="10" y="9" width="3" height="1" fill="#fff"/><rect x="13" y="9" width="2" height="1" fill="#000"/><rect x="0" y="10" width="10" height="1" fill="#000"/><rect x="10" y="10" width="3" height="1" fill="#fff"/><rect x="13" y="10" width="2" height="1" fill="#000"/><rect x="3" y="11" width="1" height="1" fill="#000"/><rect x="4" y="11" width="9" height="1" fill="#fff"/><rect x="13" y="11" width="2" height="1" fill="#000"/><rect x="3" y="12" width="12" height="1" fill="#000"/><rect x="4" y="13" width="11" height="1" fill="#000"/></svg>
<div class="ti" style="left:81px;top:149px">Feuil5 (Actions Arrivées)</div>
<svg class="a" style="left:61px;top:165px" width="15" height="15" shape-rendering="crispEdges"><rect x="3" y="0" width="8" height="1" fill="#000"/><rect x="3" y="1" width="1" height="1" fill="#000"/><rect x="4" y="1" width="6" height="1" fill="#fff"/><rect x="10" y="1" width="2" height="1" fill="#000"/><rect x="3" y="2" width="1" height="1" fill="#000"/><rect x="4" y="2" width="6" height="1" fill="#fff"/><rect x="10" y="2" width="1" height="1" fill="#000"/><rect x="11" y="2" width="1" height="1" fill="#fff"/><rect x="12" y="2" width="1" height="1" fill="#000"/><rect x="3" y="3" width="1" height="1" fill="#000"/><rect x="4" y="3" width="6" height="1" fill="#fff"/><rect x="10" y="3" width="4" height="1" fill="#000"/><rect x="3" y="4" width="1" height="1" fill="#000"/><rect x="4" y="4" width="9" height="1" fill="#fff"/><rect x="13" y="4" width="1" height="1" fill="#000"/><rect x="3" y="5" width="1" height="1" fill="#000"/><rect x="4" y="5" width="9" height="1" fill="#fff"/><rect x="13" y="5" width="1" height="1" fill="#000"/><rect x="3" y="6" width="1" height="1" fill="#000"/><rect x="4" y="6" width="9" height="1" fill="#fff"/><rect x="13" y="6" width="1" height="1" fill="#000"/><rect x="3" y="7" width="1" height="1" fill="#000"/><rect x="4" y="7" width="9" height="1" fill="#fff"/><rect x="13" y="7" width="1" height="1" fill="#000"/><rect x="3" y="8" width="1" height="1" fill="#000"/><rect x="4" y="8" width="9" height="1" fill="#fff"/><rect x="13" y="8" width="1" height="1" fill="#000"/><rect x="3" y="9" width="1" height="1" fill="#000"/><rect x="4" y="9" width="9" height="1" fill="#fff"/><rect x="13" y="9" width="1" height="1" fill="#000"/><rect x="3" y="10" width="1" height="1" fill="#000"/><rect x="4" y="10" width="9" height="1" fill="#fff"/><rect x="13" y="10" width="1" height="1" fill="#000"/><rect x="3" y="11" width="1" height="1" fill="#000"/><rect x="4" y="11" width="9" height="1" fill="#fff"/><rect x="13" y="11" width="1" height="1" fill="#000"/><rect x="3" y="12" width="1" height="1" fill="#000"/><rect x="4" y="12" width="9" height="1" fill="#fff"/><rect x="13" y="12" width="1" height="1" fill="#000"/><rect x="3" y="13" width="1" height="1" fill="#000"/><rect x="4" y="13" width="9" height="1" fill="#fff"/><rect x="13" y="13" width="1" height="1" fill="#000"/><rect x="3" y="14" width="11" height="1" fill="#000"/></svg>
<svg class="a" style="left:61px;top:169px" width="10" height="8" shape-rendering="crispEdges"><rect x="1" y="0" width="2" height="1" fill="#2a8a2a"/><rect x="7" y="0" width="2" height="1" fill="#2a8a2a"/><rect x="1" y="1" width="1" height="1" fill="#2a8a2a"/><rect x="2" y="1" width="1" height="1" fill="#d8f0d8"/><rect x="3" y="1" width="1" height="1" fill="#2a8a2a"/><rect x="6" y="1" width="1" height="1" fill="#2a8a2a"/><rect x="7" y="1" width="1" height="1" fill="#d8f0d8"/><rect x="8" y="1" width="1" height="1" fill="#2a8a2a"/><rect x="2" y="2" width="1" height="1" fill="#2a8a2a"/><rect x="3" y="2" width="1" height="1" fill="#d8f0d8"/><rect x="4" y="2" width="2" height="1" fill="#2a8a2a"/><rect x="6" y="2" width="1" height="1" fill="#d8f0d8"/><rect x="7" y="2" width="1" height="1" fill="#2a8a2a"/><rect x="3" y="3" width="1" height="1" fill="#2a8a2a"/><rect x="4" y="3" width="1" height="1" fill="#d8f0d8"/><rect x="5" y="3" width="2" height="1" fill="#2a8a2a"/><rect x="3" y="4" width="2" height="1" fill="#2a8a2a"/><rect x="5" y="4" width="1" height="1" fill="#d8f0d8"/><rect x="6" y="4" width="1" height="1" fill="#2a8a2a"/><rect x="2" y="5" width="1" height="1" fill="#2a8a2a"/><rect x="3" y="5" width="1" height="1" fill="#d8f0d8"/><rect x="4" y="5" width="2" height="1" fill="#2a8a2a"/><rect x="6" y="5" width="1" height="1" fill="#d8f0d8"/><rect x="7" y="5" width="1" height="1" fill="#2a8a2a"/><rect x="1" y="6" width="1" height="1" fill="#2a8a2a"/><rect x="2" y="6" width="1" height="1" fill="#d8f0d8"/><rect x="3" y="6" width="1" height="1" fill="#2a8a2a"/><rect x="6" y="6" width="1" height="1" fill="#2a8a2a"/><rect x="7" y="6" width="1" height="1" fill="#d8f0d8"/><rect x="8" y="6" width="1" height="1" fill="#2a8a2a"/><rect x="1" y="7" width="2" height="1" fill="#2a8a2a"/><rect x="7" y="7" width="2" height="1" fill="#2a8a2a"/></svg>
<div class="ti" style="left:81px;top:165px">ThisWorkbook</div>
</div>
<div class="a" style="left:177px;top:53px;width:1px;height:512px;background:#e3e3e3"></div>
<div class="a" style="left:179px;top:0px;width:6px;height:565px;background:#f0f0f0"></div>
<div class="a" style="left:179px;top:0px;width:6px;height:22px;background:#f0f0f0"></div>
<div class="a" style="left:185px;top:0px;width:1007px;height:565px;border-left:1px solid #a0a0a0;border-top:1px solid #a0a0a0"></div>
<div class="a" style="left:186px;top:1px;width:1006px;height:564px;border-left:1px solid #696969;border-top:1px solid #696969"></div>
<div class="a" style="left:317px;top:132px;width:775px;height:458px;border:1px solid #3a3a3a;border-radius:6px 6px 0 0;background:#d7e4f2"></div><div class="a" style="left:318px;top:133px;width:773px;height:456px;border-top:1px solid #fff;border-left:1px solid #fff;border-radius:5px 5px 0 0"></div><div class="a" style="left:319px;top:134px;width:771px;height:29px;background:linear-gradient(#c8d8ea,#d7e4f2);border-radius:4px 4px 0 0"></div><div class="a" style="left:325px;top:163px;width:759px;height:418px;background:#f0f0f0;border-right:1px solid #fff;border-bottom:1px solid #fff"></div><div class="a" style="left:335px;top:165px;width:364px;height:22px;background:#fff;border:1px solid #a3a3a3"></div><div class="a" style="left:709px;top:165px;width:365px;height:22px;background:#fff;border:1px solid #a3a3a3"></div><div class="a" style="left:339px;top:168px;font-size:12px;font-weight:bold;line-height:16px">Worksheet</div><div class="a" style="left:713px;top:168px;font-size:12px;font-weight:bold;line-height:16px">Change</div><svg class="a" style="left:686px;top:174px" width="9" height="7"><path d="M1 1.5 l3.5 3.5 l3.5 -3.5" stroke="#4d4d4d" stroke-width="2" fill="none"/></svg><svg class="a" style="left:1061px;top:174px" width="9" height="7"><path d="M1 1.5 l3.5 3.5 l3.5 -3.5" stroke="#4d4d4d" stroke-width="2" fill="none"/></svg><div class="a" style="left:325px;top:189px;width:757px;height:391px;background:#fff;border-top:1px solid #a0a0a0;border-left:1px solid #a0a0a0"></div><div class="a" style="left:326px;top:190px;width:756px;height:390px;border-top:1px solid #696969;border-left:1px solid #696969"></div><div class="a" style="left:327px;top:191px;width:20px;height:373px;background:#f0f0f0;border-left:1px solid #fff;border-right:1px solid #fff"></div><div class="a" style="left:347px;top:191px;width:1px;height:373px;background:#000"></div><svg class="a" style="left:1088px;top:132px" width="4" height="4" shape-rendering="crispEdges"><rect x="1" y="0" width="3" height="1" fill="#000"/><rect x="2" y="1" width="2" height="1" fill="#000"/><rect x="3" y="2" width="1" height="2" fill="#000"/></svg><div class="a mono" style="left:359px;top:194px;width:706px;height:371px;overflow:hidden">



















    <span class="k">End If</span>
    Cells(5, &quot;A&quot;).Select
    Application.EnableEvents = <span class="k">True</span>

</div><div class="a" style="left:1066px;top:191px;width:16px;height:373px;background:#f0f0f0"></div><div class="a" style="left:1065px;top:191px;width:17px;height:7px;background:#fff;border-right:1px solid #696969;border-bottom:1px solid #696969;box-shadow:inset -1px -1px 0 #a0a0a0"></div><svg class="a" style="left:1069px;top:204px" width="9" height="7"><path d="M1 5.5 l3.5 -3.5 l3.5 3.5" stroke="#4a4a4a" stroke-width="2.3" fill="none"/></svg><div class="a" style="left:1066px;top:215px;width:15px;height:282px;background:#cdcdcd"></div><svg class="a" style="left:1069px;top:552px" width="9" height="7"><path d="M1 1.5 l3.5 3.5 l3.5 -3.5" stroke="#4a4a4a" stroke-width="2.3" fill="none"/></svg><div class="a" style="left:327px;top:564px;width:755px;height:16px;background:#f0f0f0"></div><div class="a" style="left:327px;top:564px;width:17px;height:16px;background:#f0f0f0;border-left:1px solid #fff;border-right:1px solid #696969;border-bottom:1px solid #696969;box-shadow:inset -1px -1px 0 #a0a0a0"></div><div class="a" style="left:344px;top:563px;width:17px;height:17px;background:#f0f0f0;border-left:1px solid #696969;border-top:1px solid #696969"></div><svg class="a" style="left:330px;top:565px" width="12" height="8"><path d="M0 1.5h10M3 3.5h7M0 5.5h10" stroke="#000" stroke-width="1.1"/></svg><svg class="a" style="left:347px;top:566px" width="12" height="12"><path d="M0 1.5h10M3 3.5h7M0 5.5h10M3 7.5h7M0 9.5h10" stroke="#000" stroke-width="1.1"/></svg><svg class="a" style="left:365px;top:568px" width="7" height="9"><path d="M5.5 1 l-3.5 3.5 l3.5 3.5" stroke="#4a4a4a" stroke-width="2.3" fill="none"/></svg><div class="a" style="left:378px;top:564px;width:58px;height:15px;background:#cdcdcd"></div><svg class="a" style="left:1054px;top:567px" width="7" height="9"><path d="M1.5 1 l3.5 3.5 l-3.5 3.5" stroke="#4a4a4a" stroke-width="2.3" fill="none"/></svg>
<div class="a" style="left:1060px;top:142px;width:22px;height:18px;background:linear-gradient(#d6e0ec,#c8d4e4);border:1px solid #7a88a4;border-radius:3px"></div>
<div class="a" style="left:299px;top:65px;width:775px;height:458px;border:1px solid #000;border-radius:6px 6px 0 0;background:#b9d1ea"></div><div class="a" style="left:300px;top:66px;width:773px;height:456px;border-top:1px solid #fff;border-left:1px solid #fff;border-radius:5px 5px 0 0"></div><div class="a" style="left:301px;top:67px;width:771px;height:29px;background:linear-gradient(#95b1d0,#b9d1ea);border-radius:4px 4px 0 0"></div><div class="a" style="left:1072px;top:69px;width:1px;height:453px;background:linear-gradient(#c0e8f8 0px,#9adcf6 14px,#1ed3f5 30px)"></div><div class="a" style="left:300px;top:521px;width:773px;height:1px;background:#1ed3f5"></div><div class="a" style="left:307px;top:96px;width:759px;height:418px;background:#f0f0f0;border-right:1px solid #fff;border-bottom:1px solid #fff"></div><div class="a" style="left:317px;top:98px;width:364px;height:22px;background:#fff;border:1px solid #a3a3a3"></div><div class="a" style="left:691px;top:98px;width:365px;height:22px;background:#fff;border:1px solid #a3a3a3"></div><div class="a" style="left:321px;top:101px;font-size:12px;font-weight:bold;line-height:16px">Worksheet</div><div class="a" style="left:695px;top:101px;font-size:12px;font-weight:bold;line-height:16px">Change</div><svg class="a" style="left:668px;top:107px" width="9" height="7"><path d="M1 1.5 l3.5 3.5 l3.5 -3.5" stroke="#4d4d4d" stroke-width="2" fill="none"/></svg><svg class="a" style="left:1043px;top:107px" width="9" height="7"><path d="M1 1.5 l3.5 3.5 l3.5 -3.5" stroke="#4d4d4d" stroke-width="2" fill="none"/></svg><div class="a" style="left:307px;top:122px;width:757px;height:391px;background:#fff;border-top:1px solid #a0a0a0;border-left:1px solid #a0a0a0"></div><div class="a" style="left:308px;top:123px;width:756px;height:390px;border-top:1px solid #696969;border-left:1px solid #696969"></div><div class="a" style="left:309px;top:124px;width:20px;height:373px;background:#f0f0f0;border-left:1px solid #fff;border-right:1px solid #fff"></div><div class="a" style="left:329px;top:124px;width:1px;height:373px;background:#000"></div><div class="a" style="left:341px;top:286px;width:63px;height:16px;background:#800000"></div><div class="a" style="left:404px;top:286px;width:168px;height:16px;background:#ffff00"></div><div class="a mono" style="left:341px;top:127px;width:706px;height:371px;overflow:hidden"><span class="k">Option Explicit</span>

<span class="k">Dim</span> Retard, Ln, Lgn

<span class="k">Private Sub</span> Worksheet_Change(<span class="k">ByVal</span> Target <span class="k">As</span> Range)

    Application.EnableEvents = <span class="k">False</span>
    Cells(5, &quot;A&quot;).CurrentRegion.Offset(1, 0).Clear
    <span class="k">If Not</span> Intersect(Target, Cells(2, &quot;B&quot;)) <span class="k">Is Nothing Then</span>
        Retard = Target
        <b>With Sheets("Feuil1")</b>
            <span class="k">For</span> Ln = 2 <span class="k">To</span> .Range(&quot;A&quot; &amp; Rows.Count).End(xlUp).Row
                <span class="k">On Error GoTo</span> Suivant
                <span class="k">If</span> .Cells(Ln, &quot;L&quot;).Value &lt;&gt; &quot;&quot; <span class="k">And</span> .Cells(Ln, &quot;L&quot;).Value &gt;= Retard <span class="k">Then</span>

                    Lgn = Sheets(&quot;Feuil2&quot;).Range(&quot;A&quot; &amp; Rows.Count).End(xlUp)(2).Row
                    .Range(&quot;A&quot; &amp; Ln &amp; &quot;:AD&quot; &amp; Ln).Copy
                    Cells(Lgn, &quot;A&quot;).PasteSpecial xlPasteValues
                <span class="k">End If</span>
Suivant:
            <span class="k">Next</span> Ln
        <span class="k">End With</span>
    <span class="k">End If</span></div><div class="a" style="left:1048px;top:124px;width:16px;height:373px;background:#f0f0f0"></div><div class="a" style="left:1047px;top:124px;width:17px;height:7px;background:#fff;border-right:1px solid #696969;border-bottom:1px solid #696969;box-shadow:inset -1px -1px 0 #a0a0a0"></div><svg class="a" style="left:1051px;top:137px" width="9" height="7"><path d="M1 5.5 l3.5 -3.5 l3.5 3.5" stroke="#4a4a4a" stroke-width="2.3" fill="none"/></svg><div class="a" style="left:1048px;top:148px;width:15px;height:239px;background:#cdcdcd"></div><svg class="a" style="left:1051px;top:485px" width="9" height="7"><path d="M1 1.5 l3.5 3.5 l3.5 -3.5" stroke="#4a4a4a" stroke-width="2.3" fill="none"/></svg><div class="a" style="left:309px;top:497px;width:755px;height:16px;background:#f0f0f0"></div><div class="a" style="left:309px;top:497px;width:17px;height:16px;background:#f0f0f0;border-left:1px solid #fff;border-right:1px solid #696969;border-bottom:1px solid #696969;box-shadow:inset -1px -1px 0 #a0a0a0"></div><div class="a" style="left:326px;top:496px;width:17px;height:17px;background:#f0f0f0;border-left:1px solid #696969;border-top:1px solid #696969"></div><svg class="a" style="left:312px;top:498px" width="12" height="8"><path d="M0 1.5h10M3 3.5h7M0 5.5h10" stroke="#000" stroke-width="1.1"/></svg><svg class="a" style="left:329px;top:499px" width="12" height="12"><path d="M0 1.5h10M3 3.5h7M0 5.5h10M3 7.5h7M0 9.5h10" stroke="#000" stroke-width="1.1"/></svg><svg class="a" style="left:347px;top:501px" width="7" height="9"><path d="M5.5 1 l-3.5 3.5 l3.5 3.5" stroke="#4a4a4a" stroke-width="2.3" fill="none"/></svg><div class="a" style="left:360px;top:497px;width:58px;height:15px;background:#cdcdcd"></div><svg class="a" style="left:1036px;top:500px" width="7" height="9"><path d="M1.5 1 l3.5 3.5 l-3.5 3.5" stroke="#4a4a4a" stroke-width="2.3" fill="none"/></svg>
<div class="a" style="left:501px;top:75px;font-size:15px;line-height:18px;letter-spacing:-0.25px;white-space:pre;color:#000">Suivi Actions 2014 V1.5.xlsm - Feuil2 (Code)</div>
<svg class="a" style="left:309px;top:77px" width="18" height="15">
<rect x="2.5" y="2.5" width="12" height="10" fill="#c4c4c4" stroke="#9a9a9a"/>
<path d="M14.5 2.5 V12.5 H2.5" fill="none" stroke="#000"/>
<path d="M4 4 L8.5 9 L13 4 V11 H4 Z" fill="#d4d4d4"/>
<rect x="4.5" y="11" width="8" height="1" fill="#fff"/>
<g transform="translate(9,4) rotate(-45)"><rect x="-2.3" y="-1.4" width="4.6" height="2.8" rx="0.8" fill="#ff10ff" stroke="#000" stroke-width="1"/></g>
<g transform="translate(4,11) rotate(45)"><rect x="-2.2" y="-1.3" width="4.4" height="2.6" rx="0.8" fill="#10f0ff" stroke="#000" stroke-width="1"/></g>
<g transform="translate(13.5,11) rotate(-45)"><rect x="-2.2" y="-1.3" width="4.4" height="2.6" rx="0.8" fill="#ffe800" stroke="#000" stroke-width="1"/></g>
</svg>
<div class="a" style="left:965px;top:75px;width:31px;height:18px;background:linear-gradient(#c6d7eb 0%,#c3d4ea 42%,#9db8d6 46%,#a6bfdb 75%,#b6cce4 100%);border:1px solid #4f5f8b;border-radius:3px;box-shadow:inset 0 0 0 1px rgba(240,246,252,0.9)"></div>
<div class="a" style="left:998px;top:75px;width:32px;height:18px;background:linear-gradient(#c6d7eb 0%,#c3d4ea 42%,#9db8d6 46%,#a6bfdb 75%,#b6cce4 100%);border:1px solid #4f5f8b;border-radius:3px;box-shadow:inset 0 0 0 1px rgba(240,246,252,0.9)"></div>
<div class="a" style="left:1032px;top:75px;width:32px;height:18px;background:linear-gradient(#dd9c9e 0%,#dc9a9c 37%,#c06a22 37%,#bf6c2a 68%,#c98078 68%,#c9867e 100%);border:1px solid #4a0c0c;border-radius:3px;box-shadow:inset 0 0 0 1px rgba(255,225,205,0.9)"></div>
<div class="a" style="left:974px;top:83px;width:11px;height:5px;background:linear-gradient(#fff,#e6e6e6);border:1px solid #4a4a4a;border-radius:2px"></div>
<div class="a" style="left:1008px;top:79px;width:11px;height:9px;background:linear-gradient(#fff,#e6e6e6);border:1px solid #4a4a4a;border-radius:2px"></div>
<div class="a" style="left:1011px;top:82px;width:5px;height:3px;background:#9cb6d4;border:1px solid #4a4a4a"></div>
<svg class="a" style="left:1041px;top:78px" width="13" height="11"><path d="M3 2.5 l7 6 M10 2.5 l-7 6" stroke="#3a3a3a" stroke-width="3.8" stroke-linecap="round"/><path d="M3 2.5 l7 6 M10 2.5 l-7 6" stroke="#fff" stroke-width="2.2" stroke-linecap="round"/></svg>
<div class="a" style="left:1066px;top:140px;width:6px;height:48px;background:linear-gradient(#b9d1ea,#cfe0f2 20%,#cfe0f2 85%,#b9d1ea)"></div>
<div class="a" style="left:330px;top:173px;width:718px;height:1px;background:#808080"></div>
<svg class="a" style="left:312px;top:288px" width="16" height="13">
<path d="M5.5 0.5 h3 l2 2 v8 l-2 2 h-3 l-2 -2 l-2 -2 v-4 l2 -2 z" fill="#a00000" stroke="#000" stroke-width="1"/>
<path d="M4.5 4 H9.5 V0.8 L14.8 6.3 L9.5 11.8 V8.5 H4.5 Z" fill="#ffff00" stroke="#000" stroke-width="1"/>
</svg>
<div class="a" style="left:637px;top:305px;width:4px;height:17px;background:linear-gradient(90deg,rgba(0,0,0,0.38),rgba(0,0,0,0.18) 50%,rgba(0,0,0,0))"></div>
<div class="a" style="left:312px;top:322px;width:325px;height:3px;background:linear-gradient(rgba(0,0,0,0.38),rgba(0,0,0,0.18) 50%,rgba(0,0,0,0))"></div>
<div class="a" style="left:637px;top:322px;width:4px;height:3px;background:radial-gradient(circle at 0 0,rgba(0,0,0,0.35),rgba(0,0,0,0) 4px)"></div>
<div class="a" style="left:308px;top:302px;width:329px;height:20px;background:#fff;border:1px solid #767676"></div>
<div class="a" style="left:314px;top:305px;font-size:12px;line-height:15px;white-space:pre;letter-spacing:-0.1px;color:#4a4a4a">Sheets("Feuil1") = &lt;L'indice n'appartient pas à la sélection.&gt;</div>
<svg class="a" style="left:1052px;top:503px" width="10" height="10"><rect x="7" y="0" width="2" height="2" fill="#a3a8a3"/><rect x="4" y="3" width="2" height="2" fill="#a3a8a3"/><rect x="7" y="3" width="2" height="2" fill="#a3a8a3"/><rect x="1" y="6" width="2" height="2" fill="#a3a8a3"/><rect x="4" y="6" width="2" height="2" fill="#a3a8a3"/><rect x="7" y="6" width="2" height="2" fill="#a3a8a3"/></svg>
</body></html>
